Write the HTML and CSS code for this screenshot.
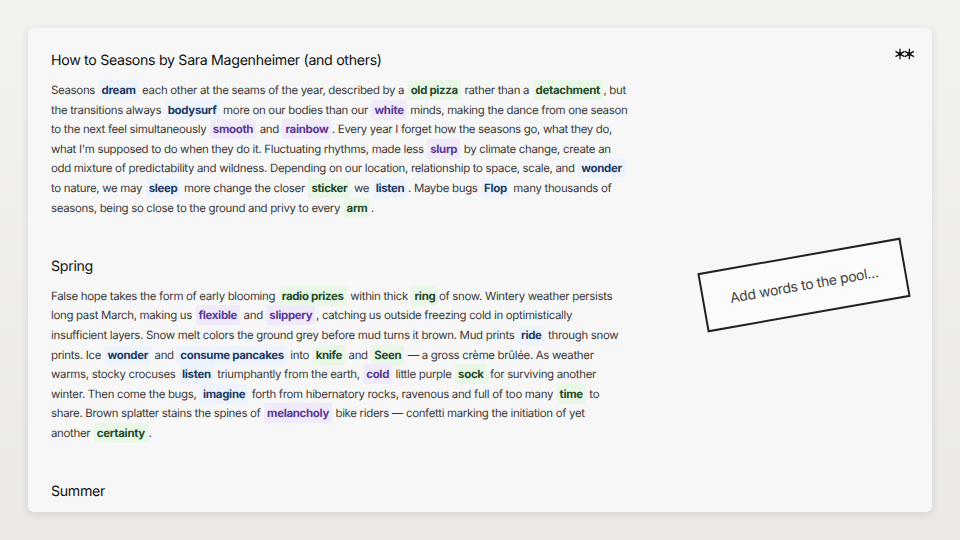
FILE: index.html
```html
<!DOCTYPE html>
<html lang="en">
<head>
<meta charset="utf-8">
<title>Seasons</title>
<link rel="stylesheet" href="styles.css">
</head>
<body>
<main class="card">
  <div class="content">
    <section class="sec">
      <h2>How to Seasons by Sara Magenheimer (and others)</h2>
      <p>Seasons <b class="w b">dream</b> each other at the seams of the year, described by a <b class="w g">old pizza</b> rather than a <b class="w g">detachment</b>, but<br>the transitions always <b class="w b">bodysurf</b> more on our bodies than our <b class="w p">white</b> minds, making the dance from one season<br>to the next feel simultaneously <b class="w p">smooth</b> and <b class="w p">rainbow</b>. Every year I forget how the seasons go, what they do,<br>what I'm supposed to do when they do it. Fluctuating rhythms, made less <b class="w p">slurp</b> by climate change, create an<br>odd mixture of predictability and wildness. Depending on our location, relationship to space, scale, and <b class="w b">wonder</b><br>to nature, we may <b class="w b">sleep</b> more change the closer <b class="w g">sticker</b> we <b class="w b">listen</b>. Maybe bugs <b class="w b">Flop</b> many thousands of<br>seasons, being so close to the ground and privy to every <b class="w g">arm</b>.</p>
    </section>
    <section class="sec">
      <h2>Spring</h2>
      <p>False hope takes the form of early blooming <b class="w g">radio prizes</b> within thick <b class="w g">ring</b>of snow. Wintery weather persists<br>long past March, making us <b class="w p">flexible</b> and <b class="w p">slippery</b>, catching us outside freezing cold in optimistically<br>insufficient layers. Snow melt colors the ground grey before mud turns it brown. Mud prints <b class="w b">ride</b> through snow<br>prints. Ice <b class="w b">wonder</b> and <b class="w b">consume pancakes</b> into <b class="w g">knife</b> and <b class="w g">Seen</b> — a gross crème brûlée. As weather<br>warms, stocky crocuses <b class="w b">listen</b> triumphantly from the earth, <b class="w p">cold</b> little purple <b class="w g">sock</b> for surviving another<br>winter. Then come the bugs, <b class="w b">imagine</b> forth from hibernatory rocks, ravenous and full of too many <b class="w g">time</b> to<br>share. Brown splatter stains the spines of <b class="w p">melancholy</b> bike riders — confetti marking the initiation of yet<br>another <b class="w g">certainty</b>.</p>
    </section>
    <section class="sec">
      <h2>Summer</h2>
    </section>
  </div>
  <svg class="star" viewBox="0 0 20 12" aria-hidden="true">
    <g stroke="#111" stroke-width="1.3" fill="none">
      <path d="M5 0.8V11.2M0.5 3.4L9.5 8.6M0.5 8.6L9.5 3.4"/>
      <path d="M14.4 0.8V11.2M9.9 3.4L18.9 8.6M9.9 8.6L18.9 3.4"/>
    </g>
    <circle cx="5" cy="6" r="2" fill="#111"/>
    <circle cx="14.4" cy="6" r="2" fill="#111"/>
  </svg>
  <div class="pool">Add words to the pool...</div>
</main>
</body>
</html>
```
FILE: styles.css
```css
* { box-sizing: border-box; }
html, body { margin: 0; height: 100%; }
body {
  width: 960px; height: 540px; overflow: hidden;
  background: linear-gradient(#f4f2ef, #ebe8e6); padding: 28px;
  font-family: Inter, "Liberation Sans", sans-serif; color: #3a3a3a;
  letter-spacing: -0.02em; text-rendering: geometricPrecision;
}
.card {
  position: relative; height: 484px; overflow: hidden;
  background: #f7f7f7; border-radius: 6px;
  box-shadow: 0 2px 8px rgba(0,0,0,.10);
  padding: 23px 23px;
}
.content { width: 590px; }
.sec { margin-bottom: 38.6px; }
h2 { margin: 0 0 10px; font-size: 14.2px; line-height: 20px; font-weight: 400; color: #111; }
p { margin: 0; font-size: 11.46px; line-height: 19.6px; white-space: nowrap; }
.w { font-weight: 700; padding: 3px 3px; margin: 0 .6px; border-radius: 2px; }
.b { background: #edf4fd; color: #1c3a66; }
.g { background: #e9f8e6; color: #254a2c; }
.p { background: #f0eafb; color: #5a3a96; }
.star { position: absolute; top: 20px; left: 867px; width: 20px; height: 12px; }
.pool {
  position: absolute; left: 673px; top: 227px; width: 206px; height: 60px;
  border: 2px solid #222; background: #fbfbfb;
  transform: rotate(-10deg);
  display: flex; align-items: center; justify-content: center;
  font-size: 14px; color: #444;
}
```
